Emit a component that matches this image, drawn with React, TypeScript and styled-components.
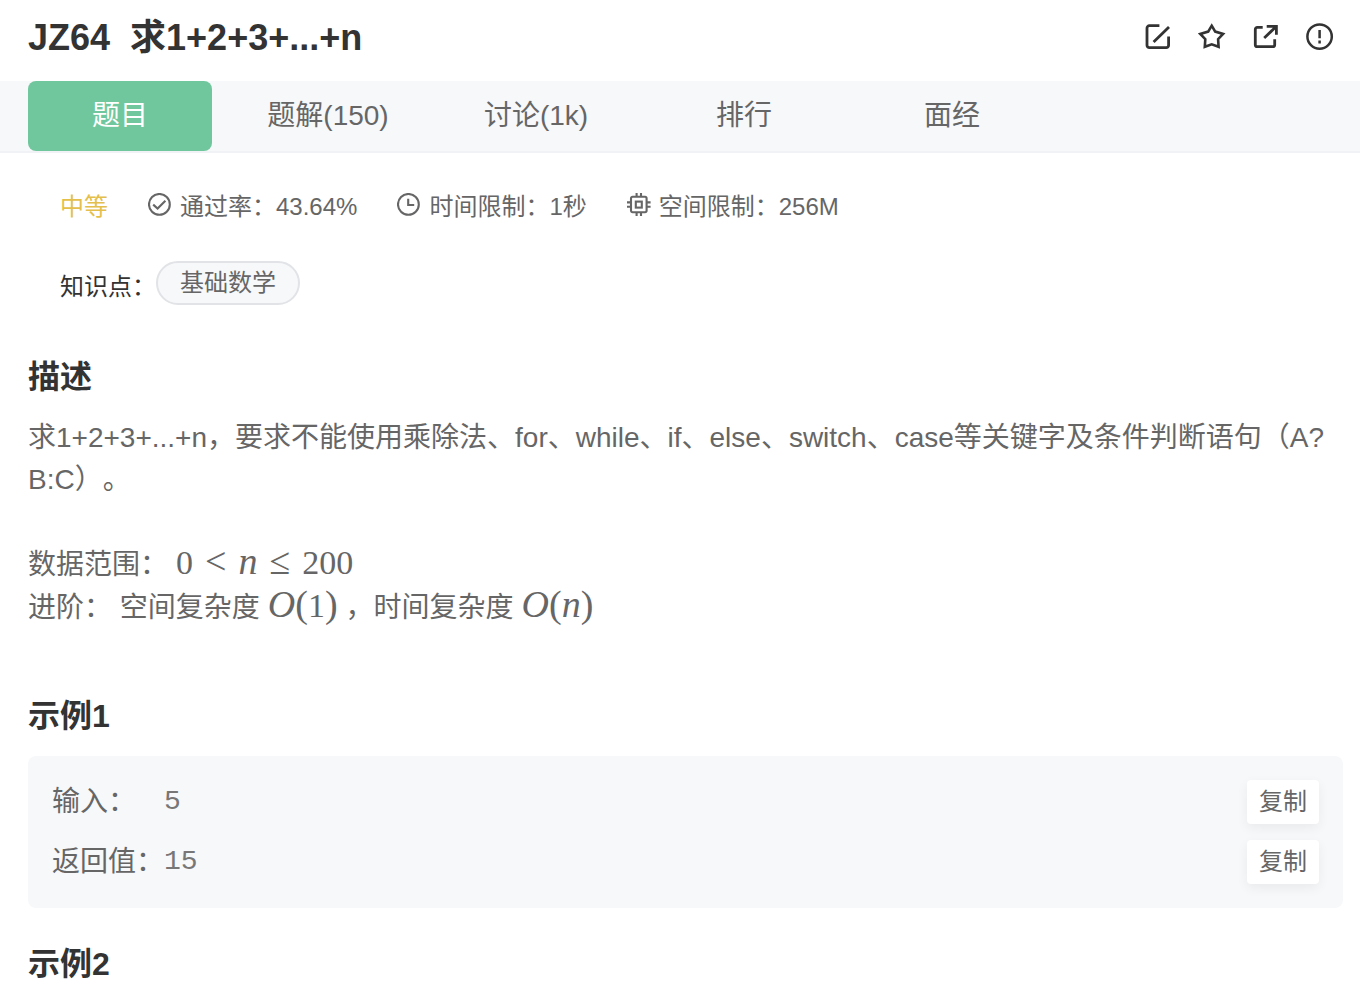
import React from 'react';
import styled, { createGlobalStyle } from 'styled-components';

const GlobalStyle = createGlobalStyle`
  *, *::before, *::after { box-sizing: border-box; }
  body {
    margin: 0;
    background: #fff;
    color: #666;
    font-family: "Liberation Sans", "Noto Sans CJK SC", sans-serif;
    font-size: 28px;
    text-spacing-trim: space-all;
  }
  button { font-family: inherit; cursor: pointer; }
  h1, h2, p { margin: 0; }
`;

const Header = styled.header`
  display: flex;
  align-items: center;
  justify-content: space-between;
  height: 81px;
  padding: 0 26px 6px 28px;
`;

const Title = styled.h1`
  display: flex;
  gap: 20px;
  color: #333;
  font-size: 36px;
  line-height: 52px;
  font-weight: 700;
`;

const Actions = styled.div`
  display: flex;
  gap: 26px;
  padding-bottom: 1px;
`;

const IconButton = styled.button`
  display: flex;
  padding: 0;
  border: 0;
  background: none;
  color: #333;
`;

const Icon = styled.svg<{ $size: number }>`
  flex: none;
  width: ${(p) => p.$size}px;
  height: ${(p) => p.$size}px;
  fill: none;
  stroke: currentColor;
`;

const Tabs = styled.nav`
  display: flex;
  gap: 24px;
  padding: 0 28px;
  background: #f7f8fa;
  border-bottom: 2px solid #f1f2f5;
`;

const Tab = styled.button<{ $active?: boolean }>`
  width: 184px;
  height: 70px;
  padding: 0;
  border: 0;
  border-radius: 8px;
  background: ${(p) => (p.$active ? '#71c79d' : 'transparent')};
  color: ${(p) => (p.$active ? '#fff' : '#666')};
  font-size: 28px;
  line-height: 42px;
`;

const Meta = styled.div`
  display: flex;
  gap: 40px;
  padding: 36px 60px 0;
  font-size: 24px;
  line-height: 36px;
`;

const Difficulty = styled.span`
  color: #e4bf4c;
`;

const MetaItem = styled.span`
  display: flex;
  align-items: flex-start;
  gap: 8px;

  svg { margin-top: 4px; }
`;

const Knowledge = styled.div`
  display: flex;
  align-items: flex-end;
  padding: 36px 60px 0;
  color: #333;
  font-size: 24px;
  line-height: 36px;
`;

const Tag = styled.button`
  height: 44px;
  padding: 0 22px;
  border: 2px solid #e1e3e6;
  border-radius: 22px;
  background: #f7f8fa;
  color: #666;
  font-size: 24px;
  line-height: 36px;
`;

const Content = styled.main`
  padding: 48px 17px 0 28px;
`;

const Heading = styled.h2`
  color: #333;
  font-size: 32px;
  line-height: 48px;
  font-weight: 700;
`;

const Description = styled.div`
  padding: 16px 0 63px;
  line-height: 42px;
`;

const Constraints = styled.div`
  padding-top: 42px;
  line-height: 43px;
`;

const MathText = styled.span`
  margin: 0 8px;
  font-family: "Liberation Serif", serif;
  font-size: 34px;
  line-height: 0;
`;

const Symbol = styled.span`
  font-size: 38px;
`;

const Relation = styled(Symbol)`
  margin: 0 12px;
`;

const Example = styled.section`
  padding-bottom: 32px;
`;

const Panel = styled.div`
  display: flex;
  flex-direction: column;
  gap: 16px;
  margin-top: 16px;
  padding: 24px;
  border-radius: 8px;
  background: #f7f8fa;
`;

const PanelRow = styled.div`
  display: grid;
  grid-template-columns: 112px 1fr auto;
  align-items: center;
  line-height: 42px;
`;

const Value = styled.code`
  color: #777;
  font-family: "Liberation Mono", monospace;
  font-size: 28px;
`;

const CopyButton = styled.button`
  height: 44px;
  padding: 0 12px;
  border: 0;
  border-radius: 4px;
  background: #fff;
  box-shadow: 0 4px 12px rgba(0, 0, 0, 0.06);
  color: #666;
  font-size: 24px;
  line-height: 36px;
`;

const EditIcon = () => (
  <Icon $size={28} viewBox="0 0 28 28" strokeWidth="2.8" aria-hidden="true">
    <path d="M15.4 2.7H5.4a2.4 2.4 0 0 0-2.4 2.4v17.2a2.4 2.4 0 0 0 2.4 2.4h16.8a2.4 2.4 0 0 0 2.4-2.4V13.6M9.6 18.9 25 3.9" />
  </Icon>
);

const StarIcon = () => (
  <Icon $size={28} viewBox="0 0 28 28" strokeWidth="2.6" aria-hidden="true">
    <path d="M13.7 2.7 17.2 8.6 25.1 11 20.1 16.2 20.6 23.8 13.7 21.3 6.8 23.8 7.3 16.2 2.3 11 10.2 8.6Z" />
  </Icon>
);

const ShareIcon = () => (
  <Icon $size={28} viewBox="0 0 28 28" strokeWidth="2.8" aria-hidden="true">
    <path d="M10.7 4.4H5.3a2 2 0 0 0-2 2v15.3a2 2 0 0 0 2 2h15.4a2 2 0 0 0 2-2V16.3M14.7 3.3h9.7V11.8M12.2 15 24.2 3.5" />
  </Icon>
);

const AlertIcon = () => (
  <Icon $size={28} viewBox="0 0 28 28" strokeWidth="2.5" aria-hidden="true">
    <circle cx="13.6" cy="13.6" r="12.2" />
    <path d="M13.6 7v8.2M13.6 17.6v2.8" />
  </Icon>
);

const CheckIcon = () => (
  <Icon $size={24} viewBox="0 0 24 24" strokeWidth="2.1" aria-hidden="true">
    <circle cx="11.4" cy="11.4" r="10.4" />
    <path d="M5.2 11.6 9.6 15.5 17.4 7.8" />
  </Icon>
);

const ClockIcon = () => (
  <Icon $size={24} viewBox="0 0 24 24" strokeWidth="2.1" aria-hidden="true">
    <circle cx="11.4" cy="11.4" r="10.4" />
    <path d="M11.2 5.8v6.2h6" />
  </Icon>
);

const ChipIcon = () => (
  <Icon $size={24} viewBox="0 0 24 24" strokeWidth="2.1" aria-hidden="true">
    <rect x="4" y="3.8" width="15.6" height="15.4" rx="1.6" />
    <rect x="8.8" y="8.6" width="6" height="6" />
    <path d="M9.6 0v3.8M14 0v3.8M9.6 19.2V23M14 19.2V23M0 9.4h4M0 13.8h4M19.6 9.4h4M19.6 13.8h4" />
  </Icon>
);

const tabs = ['题目', '题解(150)', '讨论(1k)', '排行', '面经'];

const actions = [
  { label: '编辑', icon: <EditIcon /> },
  { label: '收藏', icon: <StarIcon /> },
  { label: '分享', icon: <ShareIcon /> },
  { label: '反馈', icon: <AlertIcon /> },
];

const limits = [
  { text: '通过率：43.64%', icon: <CheckIcon /> },
  { text: '时间限制：1秒', icon: <ClockIcon /> },
  { text: '空间限制：256M', icon: <ChipIcon /> },
];

const sample = [
  { label: '输入：', value: '5' },
  { label: '返回值：', value: '15' },
];

export default function App() {
  return (
    <>
      <GlobalStyle />
      <Header>
        <Title>
          <span>JZ64</span>
          <span>求1+2+3+...+n</span>
        </Title>
        <Actions>
          {actions.map((a) => (
            <IconButton key={a.label} type="button" aria-label={a.label}>
              {a.icon}
            </IconButton>
          ))}
        </Actions>
      </Header>
      <Tabs>
        {tabs.map((t, i) => (
          <Tab key={t} type="button" $active={i === 0}>
            {t}
          </Tab>
        ))}
      </Tabs>
      <Meta>
        <Difficulty>中等</Difficulty>
        {limits.map((l) => (
          <MetaItem key={l.text}>
            {l.icon}
            {l.text}
          </MetaItem>
        ))}
      </Meta>
      <Knowledge>
        <span>知识点：</span>
        <Tag type="button">基础数学</Tag>
      </Knowledge>
      <Content>
        <Heading>描述</Heading>
        <Description>
          <p>
            求1+2+3+...+n，要求不能使用乘除法、for、while、if、else、switch、case等关键字及条件判断语句（A?B:C）。
          </p>
          <Constraints>
            <p>
              数据范围：
              <MathText>
                0<Relation>&lt;</Relation>
                <Symbol as="i">n</Symbol>
                <Relation>≤</Relation>200
              </MathText>
            </p>
            <p>
              进阶： 空间复杂度
              <MathText>
                <Symbol as="i">O</Symbol>
                <Symbol>(</Symbol>1<Symbol>)</Symbol>
              </MathText>
              ，时间复杂度
              <MathText>
                <Symbol as="i">O</Symbol>
                <Symbol>(</Symbol>
                <Symbol as="i">n</Symbol>
                <Symbol>)</Symbol>
              </MathText>
            </p>
          </Constraints>
        </Description>
        <Example>
          <Heading>示例1</Heading>
          <Panel>
            {sample.map((s) => (
              <PanelRow key={s.label}>
                <span>{s.label}</span>
                <Value>{s.value}</Value>
                <CopyButton type="button">复制</CopyButton>
              </PanelRow>
            ))}
          </Panel>
        </Example>
        <Heading>示例2</Heading>
      </Content>
    </>
  );
}
